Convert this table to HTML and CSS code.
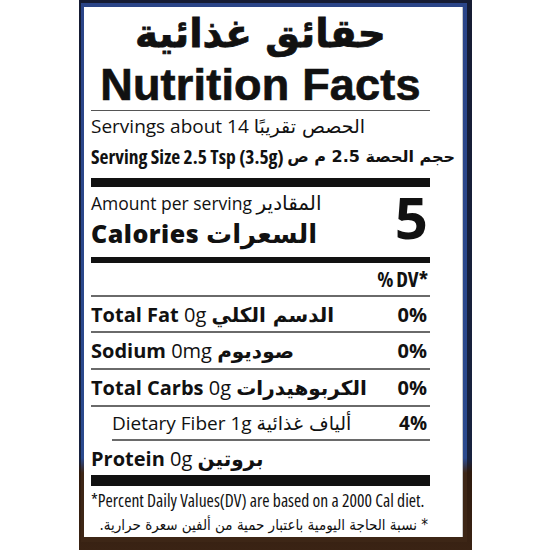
FILE: index.html
```html
<!DOCTYPE html>
<html lang="en">
<head>
<meta charset="utf-8">
<title>Nutrition Facts</title>
<link rel="stylesheet" href="styles.css">
</head>
<body>
<div class="frame">
  <div class="stripe">
    <div class="label">
      <div class="title-ar" dir="rtl">حقائق غذائية</div>
      <div class="title-en">Nutrition Facts</div>
      <div class="rule thin"></div>
      <div class="line servings">Servings about 14 <span class="ar" dir="rtl">الحصص تقريبًا</span></div>
      <div class="line size">Serving Size 2.5 Tsp (3.5g) <span class="ar" dir="rtl">حجم الحصة 2.5 م ص</span></div>
      <div class="bar bar-9"></div>
      <div class="cal">
        <div class="cal-left">
          <div class="amount">Amount per serving <span class="ar" dir="rtl">المقادير</span></div>
          <div class="calories">Calories <span class="ar" dir="rtl">السعرات</span></div>
        </div>
        <div class="cal-num">5</div>
      </div>
      <div class="bar bar-6"></div>
      <div class="dv-head">% DV*</div>
      <div class="rule"></div>
      <div class="row r34"><span><b>Total Fat</b> 0g <b class="ar" dir="rtl">الدسم الكلي</b></span><b>0%</b></div>
      <div class="rule"></div>
      <div class="row r35"><span><b>Sodium</b> 0mg <b class="ar" dir="rtl">صوديوم</b></span><b>0%</b></div>
      <div class="rule"></div>
      <div class="row r35"><span><b>Total Carbs</b> 0g <b class="ar" dir="rtl">الكربوهيدرات</b></span><b>0%</b></div>
      <div class="rule"></div>
      <div class="row r32 sub"><span>Dietary Fiber 1g <span class="ar" dir="rtl">ألياف غذائية</span></span><b>4%</b></div>
      <div class="rule indent"></div>
      <div class="row r34"><span><b>Protein</b> 0g <b class="ar" dir="rtl">بروتين</b></span></div>
      <div class="bar bar-11"></div>
      <div class="foot-en">*Percent Daily Values(DV) are based on a 2000 Cal diet.</div>
      <div class="foot-ar" dir="rtl">* نسبة الحاجة اليومية باعتبار حمية من ألفين سعرة حرارية.</div>
    </div>
  </div>
</div>
</body>
</html>
```

FILE: styles.css
```css
html, body {
  margin: 0;
  padding: 0;
  background: #ffffff;
}

body {
  width: 550px;
  height: 550px;
  overflow: hidden;
  font-family: "Open Sans", "DejaVu Sans", sans-serif;
  color: #111111;
}

.frame {
  margin-left: 79px;
  width: 393px;
  height: 550px;
  box-sizing: border-box;
  padding: 3px 5px 8px 2px;
  background: linear-gradient(to bottom, #161c33 0, #18223f 460px, #2e1a0e 472px, #3a2314 100%);
}

.stripe {
  height: 100%;
  box-sizing: border-box;
  padding: 4px 4px 5px 3px;
  background: linear-gradient(to bottom, #2b4588 0, #2b4a8e 455px, #3d2616 470px, #3d2616 100%);
}

.label {
  height: 100%;
  box-sizing: border-box;
  background: #ffffff;
  padding: 0 33px 0 7px;
  box-shadow: inset -1px 0 0 #c8c8c8;
}

.ar {
  font-family: "DejaVu Sans", sans-serif;
}

.title-ar {
  height: 53px;
  line-height: 53px;
  text-align: center;
  font-family: "DejaVu Sans", sans-serif;
  font-weight: bold;
  font-size: 39px;
  -webkit-text-stroke: 0.8px #111111;
}

.title-en {
  height: 50px;
  line-height: 50px;
  text-align: center;
  font-family: "Liberation Sans", Arial, sans-serif;
  font-weight: bold;
  font-size: 45px;
  letter-spacing: 0.2px;
  -webkit-text-stroke: 0.7px #111111;
}

.rule {
  height: 2px;
  background: #6a6a6a;
}

.rule.thin {
  height: 1px;
  background: #555555;
}

.rule.indent {
  margin-left: 21px;
}

.bar {
  background: #111111;
}

.bar-9 {
  height: 9px;
  margin-top: 6px;
}

.bar-6 {
  height: 6px;
}

.bar-11 {
  height: 11px;
}

.line {
  display: flex;
  align-items: center;
  white-space: pre;
}

.servings {
  height: 29px;
  font-size: 19px;
}

.servings .ar {
  font-size: 19px;
}

.size {
  height: 32px;
  font-size: 19.5px;
  font-weight: bold;
  font-stretch: 75%;
}

.size .ar {
  font-size: 16px;
  font-weight: bold;
  font-stretch: 100%;
}

.cal {
  height: 70px;
  box-sizing: border-box;
  padding: 3px 0 7px;
  display: flex;
  justify-content: space-between;
  align-items: center;
}

.amount {
  height: 26px;
  line-height: 26px;
  font-size: 17.5px;
  white-space: pre;
}

.amount .ar {
  font-size: 20px;
}

.calories {
  height: 34px;
  line-height: 34px;
  font-size: 25px;
  font-weight: 800;
  letter-spacing: 0.5px;
  white-space: pre;
}

.calories .ar {
  font-weight: bold;
  font-size: 26px;
  letter-spacing: 0;
}

.cal-num {
  font-size: 58px;
  font-weight: bold;
  line-height: 60px;
  padding-right: 2px;
  margin-top: -6px;
}

.dv-head {
  height: 32px;
  display: flex;
  align-items: center;
  justify-content: flex-end;
  font-size: 21px;
  font-weight: bold;
  font-stretch: 75%;
  padding-right: 2px;
  word-spacing: -1px;
}

.row {
  display: flex;
  align-items: center;
  justify-content: space-between;
  font-size: 20px;
  white-space: pre;
  padding-right: 3px;
}

.row b {
  font-weight: bold;
}

.row .ar {
  font-size: 20px;
  letter-spacing: -0.3px;
}

.r32 { height: 32px; }
.r34 { height: 34px; }
.r35 { height: 35px; }

.row.sub {
  padding-left: 21px;
  font-size: 19px;
}

.row.sub .ar {
  font-size: 19px;
}

.foot-en {
  height: 28px;
  line-height: 28px;
  font-size: 17.6px;
  font-stretch: 75%;
  white-space: nowrap;
}

.foot-ar {
  height: 22px;
  line-height: 22px;
  font-family: "DejaVu Sans Condensed", "DejaVu Sans", sans-serif;
  font-stretch: semi-condensed;
  font-size: 15px;
  text-align: right;
  padding-right: 2px;
  white-space: nowrap;
}
```
